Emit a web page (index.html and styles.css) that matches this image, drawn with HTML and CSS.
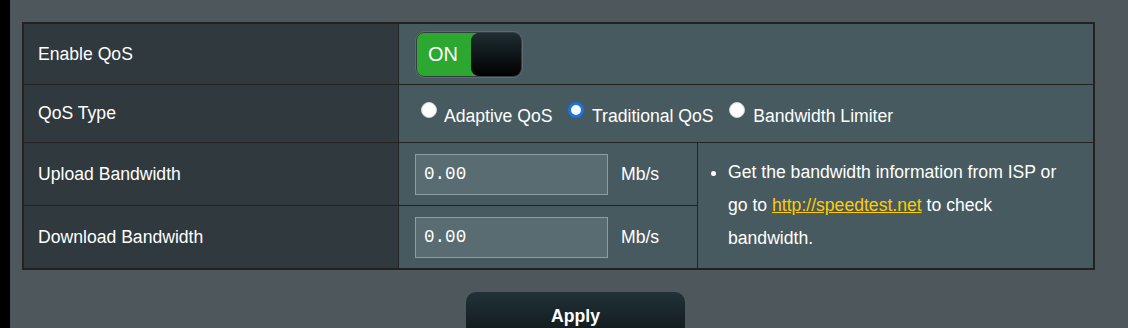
FILE: index.html
```html
<!DOCTYPE html>
<html>
<head>
<meta charset="utf-8">
<title>QoS</title>
<link rel="stylesheet" href="styles.css">
</head>
<body>
<div class="page">
    <div class="sidebar"></div>
    <div class="main">
        <table class="qos">
            <tr class="row-enable">
                <th>Enable QoS</th>
                <td colspan="2">
                    <div class="toggle">
                        <span class="toggle-on">ON</span>
                        <span class="toggle-knob"></span>
                    </div>
                </td>
            </tr>
            <tr class="row-type">
                <th>QoS Type</th>
                <td colspan="2">
                    <label class="radio"><input type="radio" name="qostype"> Adaptive QoS</label>
                    <label class="radio"><input type="radio" name="qostype" checked> Traditional QoS</label>
                    <label class="radio"><input type="radio" name="qostype"> Bandwidth Limiter</label>
                </td>
            </tr>
            <tr class="row-bw">
                <th>Upload Bandwidth</th>
                <td class="bw-cell">
                    <input class="bw-input" type="text" value="0.00"><span class="unit">Mb/s</span>
                </td>
                <td class="note" rowspan="2">
                    <ul>
                        <li>Get the bandwidth information from ISP or go to <a href="#">http://speedtest.net</a> to check bandwidth.</li>
                    </ul>
                </td>
            </tr>
            <tr class="row-bw">
                <th>Download Bandwidth</th>
                <td class="bw-cell">
                    <input class="bw-input" type="text" value="0.00"><span class="unit">Mb/s</span>
                </td>
            </tr>
        </table>
        <div class="actions">
            <button class="apply">Apply</button>
        </div>
    </div>
</div>
</body>
</html>
```

FILE: styles.css
```css
body, html {
    margin: 0px;
    padding: 0px;
    background-color: #4d575c;
    font-family: "Liberation Sans", Arial, sans-serif;
    font-size: 17.6px;
    color: #ffffff;
    overflow: hidden;
}
.page {
    display: flex;
    height: 328px;
}
.sidebar {
    width: 10px;
    background-color: #000000;
}
.main {
    flex: 1;
    padding-top: 22px;
    padding-left: 12px;
}
.qos {
    border-collapse: collapse;
    border: 2px solid #222222;
    width: 1073px;
}
.qos th, .qos td {
    border: 1px solid #222222;
    padding: 0px;
    vertical-align: middle;
}
.qos th {
    width: 360px;
    padding-left: 14px;
    text-align: left;
    font-weight: normal;
    background-color: #2f393e;
}
.qos td {
    background-color: #475a5f;
    padding-left: 16px;
}
.row-enable th, .row-enable td {
    height: 60px;
}
.row-type th, .row-type td {
    height: 57px;
}
.row-bw th, .row-bw td {
    height: 62px;
}

/* toggle */
.toggle {
    display: flex;
    width: 104px;
    height: 43px;
    padding: 1px;
    border: 1px solid #5e6c71;
    border-radius: 10px;
    background-color: #3b474c;
    box-shadow: inset 0 0 2px #22292c;
}
.toggle-on {
    width: 60px;
    margin-right: -6px;
    background-color: #2ca72f;
    border-radius: 7px 0 0 7px;
    font-size: 20px;
    line-height: 43px;
    padding-left: 11px;
    box-sizing: border-box;
}
.toggle-knob {
    flex: 1;
    border-radius: 8px;
    background: linear-gradient(#1f2d32, #000000);
}

/* radios */
.radio {
    margin-right: 5px;
    position: relative;
    top: 1px;
}
.radio input {
    appearance: none;
    -webkit-appearance: none;
    width: 16px;
    height: 16px;
    margin: 0px 3px 0px 6px;
    border-radius: 50%;
    background-color: #ffffff;
    border: 1px solid #cfd4d6;
    box-sizing: border-box;
    vertical-align: 4px;
}
.radio input:checked {
    border: 3px solid #1a74e8;
    background-color: #ffffff;
}

/* bandwidth */
.bw-cell {
    width: 282px;
    white-space: nowrap;
}
.bw-input {
    width: 193px;
    height: 41px;
    box-sizing: border-box;
    border: 1px solid #8d9ea3;
    background-color: #586c72;
    color: #ffffff;
    font-family: "Liberation Mono", monospace;
    font-size: 17.6px;
    padding-left: 8px;
    vertical-align: middle;
}
.unit {
    margin-left: 13px;
    vertical-align: middle;
}
.note {
    vertical-align: top !important;
    padding-left: 0px !important;
}
.note ul {
    margin: 13px 20px 0px 0px;
    padding-left: 30px;
    line-height: 33px;
}
.note a {
    color: #ffcc00;
}

/* apply */
.actions {
    margin-top: 22px;
    padding-left: 444px;
}
.apply {
    width: 219px;
    height: 48px;
    border: none;
    border-radius: 10px;
    background: linear-gradient(#213238, #0f1618);
    color: #ffffff;
    font-family: "Liberation Sans", Arial, sans-serif;
    font-size: 17.6px;
    font-weight: bold;
}
```
